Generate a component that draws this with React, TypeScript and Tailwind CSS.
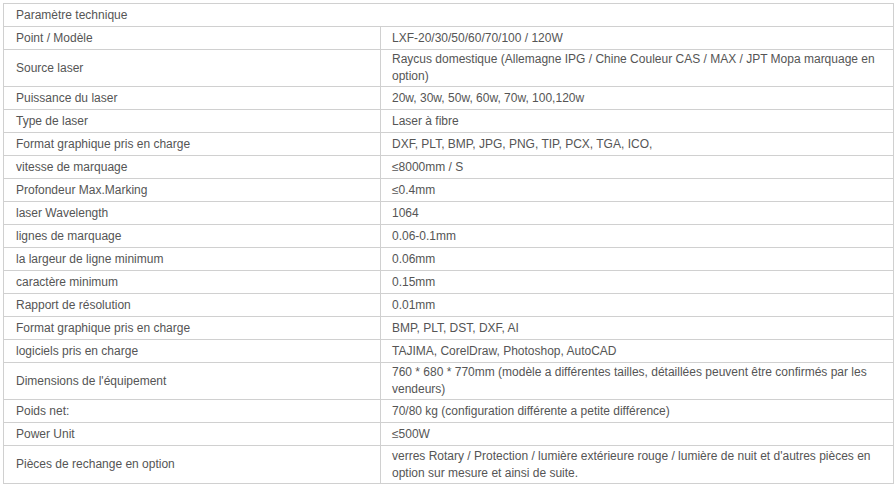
const rows: { label: string; value: string; tall?: boolean }[] = [
  { label: "Point / Modèle", value: "LXF-20/30/50/60/70/100 / 120W" },
  {
    label: "Source laser",
    value: "Raycus domestique (Allemagne IPG / Chine Couleur CAS / MAX / JPT Mopa marquage en option)",
    tall: true,
  },
  { label: "Puissance du laser", value: "20w, 30w, 50w, 60w, 70w, 100,120w" },
  { label: "Type de laser", value: "Laser à fibre" },
  { label: "Format graphique pris en charge", value: "DXF, PLT, BMP, JPG, PNG, TIP, PCX, TGA, ICO," },
  { label: "vitesse de marquage", value: "≤8000mm / S" },
  { label: "Profondeur Max.Marking", value: "≤0.4mm" },
  { label: "laser Wavelength", value: "1064" },
  { label: "lignes de marquage", value: "0.06-0.1mm" },
  { label: "la largeur de ligne minimum", value: "0.06mm" },
  { label: "caractère minimum", value: "0.15mm" },
  { label: "Rapport de résolution", value: "0.01mm" },
  { label: "Format graphique pris en charge", value: "BMP, PLT, DST, DXF, AI" },
  { label: "logiciels pris en charge", value: "TAJIMA, CorelDraw, Photoshop, AutoCAD" },
  {
    label: "Dimensions de l'équipement",
    value: "760 * 680 * 770mm (modèle a différentes tailles, détaillées peuvent être confirmés par les vendeurs)",
    tall: true,
  },
  { label: "Poids net:", value: "70/80 kg (configuration différente a petite différence)" },
  { label: "Power Unit", value: "≤500W" },
  {
    label: "Pièces de rechange en option",
    value: "verres Rotary / Protection / lumière extérieure rouge / lumière de nuit et d'autres pièces en option sur mesure et ainsi de suite.",
    tall: true,
  },
];

export default function App() {
  return (
    <div className="min-h-screen w-full bg-white pt-[3px] pl-[3px]" style={{ fontFamily: '"Liberation Sans", Arial, sans-serif' }}>
      <div className="w-[891px] border border-[#d0d0d0] bg-white text-[12px] leading-[17px] text-[#555]">
        <div className="flex h-[23px] items-center border-b border-[#d0d0d0] px-3">Paramètre technique</div>
        {rows.map((r, i) => (
          <div
            key={i}
            className={`flex ${r.tall ? "h-[37px]" : "h-[23px]"} ${i < rows.length - 1 ? "border-b border-[#d0d0d0]" : ""}`}
          >
            <div className="flex w-[377px] items-center border-r border-[#d0d0d0] px-3">{r.label}</div>
            <div className="flex flex-1 items-center pl-[11px] pr-3">{r.value}</div>
          </div>
        ))}
      </div>
    </div>
  );
}
